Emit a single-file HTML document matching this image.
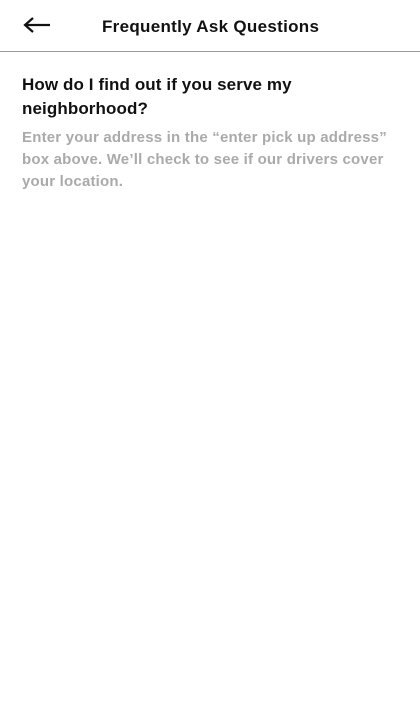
<!DOCTYPE html>
<html><head><meta charset="utf-8"><style>
body{margin:0;width:420px;height:720px;background:#fff;font-family:"Liberation Sans",sans-serif;position:relative;overflow:hidden}
.hdr{position:absolute;left:0;top:0;width:420px;height:51px;border-bottom:1px solid #999}
.t{position:absolute;left:102px;top:17px;font-size:17px;font-weight:bold;color:#111;letter-spacing:0.3px}
.back{position:absolute;left:22px;top:15px}
.q{position:absolute;left:22px;top:73px;width:390px;font-size:17px;font-weight:bold;line-height:24px;color:#111;letter-spacing:0.1px}
.a{position:absolute;left:22px;top:127px;width:395px;font-size:15px;font-weight:bold;line-height:22px;color:#aaa;letter-spacing:0.2px}
</style></head><body>
<div class="hdr">
<svg class="back" width="30" height="20" viewBox="0 0 30 20"><path d="M28 10H3M11 3L3 10L11 17" stroke="#111" stroke-width="2.2" fill="none"/></svg>
<div class="t">Frequently Ask Questions</div>
</div>
<div class="q">How do I find out if you serve my<br>neighborhood?</div>
<div class="a">Enter your address in the “enter pick up address”<br>box above. We’ll check to see if our drivers cover<br>your location.</div>
</body></html>
